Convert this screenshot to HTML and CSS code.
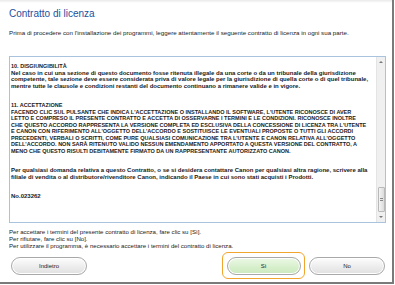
FILE: index.html
```html
<!DOCTYPE html>
<html lang="it">
<head>
<meta charset="utf-8">
<link rel="stylesheet" href="styles.css">
</head>
<body>
<div class="window">
  <h1 class="title">Contratto di licenza</h1>
  <p class="intro">Prima di procedere con l'installazione dei programmi, leggere attentamente il seguente contratto di licenza in ogni sua parte.</p>
  <div class="box">
    <div class="content">
      <p class="para lower"><span class="caps">10. DISGIUNGIBILITÀ</span><br>Nel caso in cui una sezione di questo documento fosse ritenuta illegale da una corte o da un tribunale della giurisdizione<br>competente, tale sezione deve essere considerata priva di valore legale per la giurisdizione di quella corte o di quel tribunale,<br>mentre tutte le clausole e condizioni restanti del documento continuano a rimanere valide e in vigore.</p>
      <p class="para">11. ACCETTAZIONE<br>FACENDO CLIC SUL PULSANTE CHE INDICA L'ACCETTAZIONE O INSTALLANDO IL SOFTWARE, L'UTENTE RICONOSCE DI AVER<br>LETTO E COMPRESO IL PRESENTE CONTRATTO E ACCETTA DI OSSERVARNE I TERMINI E LE CONDIZIONI. RICONOSCE INOLTRE<br>CHE QUESTO ACCORDO RAPPRESENTA LA VERSIONE COMPLETA ED ESCLUSIVA DELLA CONCESSIONE DI LICENZA TRA L'UTENTE<br>E CANON CON RIFERIMENTO ALL'OGGETTO DELL'ACCORDO E SOSTITUISCE LE EVENTUALI PROPOSTE O TUTTI GLI ACCORDI<br>PRECEDENTI, VERBALI O SCRITTI, COME PURE QUALSIASI COMUNICAZIONE TRA L'UTENTE E CANON RELATIVA ALL'OGGETTO<br>DELL'ACCORDO. NON SARÀ RITENUTO VALIDO NESSUN EMENDAMENTO APPORTATO A QUESTA VERSIONE DEL CONTRATTO, A<br>MENO CHE QUESTO RISULTI DEBITAMENTE FIRMATO DA UN RAPPRESENTANTE AUTORIZZATO CANON.</p>
      <p class="para lower">Per qualsiasi domanda relativa a questo Contratto, o se si desidera contattare Canon per qualsiasi altra ragione, scrivere alla<br>filiale di vendita o al distributore/rivenditore Canon, indicando il Paese in cui sono stati acquisti i Prodotti.</p>
      <p class="para lower">No.023262</p>
    </div>
    <div class="scrollbar">
      <span class="arrow up"></span>
      <span class="track"></span>
      <span class="thumb"><span class="grip"></span></span>
      <span class="arrow down"></span>
    </div>
  </div>
  <p class="notes">Per accettare i termini del presente contratto di licenza, fare clic su [Sì].<br>Per rifiutare, fare clic su [No].<br>Per utilizzare il programma, è necessario accettare i termini del contratto di licenza.</p>
  <div class="buttons">
    <button class="btn">Indietro</button>
    <span class="spacer"></span>
    <span class="focus"><button class="btn yes">Sì</button></span>
    <button class="btn">No</button>
  </div>
</div>
</body>
</html>
```

FILE: styles.css
```css
html, body {
  margin: 0;
  padding: 0;
  background: #ffffff;
}
body {
  width: 395px;
  height: 285px;
  overflow: hidden;
  font-family: "Liberation Sans", Arial, sans-serif;
}
.window {
  box-sizing: border-box;
  width: 394px;
  height: 284px;
  border-right: 2px solid #7a7a7a;
  border-bottom: 2px solid #7a7a7a;
  background: linear-gradient(#e9e9e9, #ffffff 3px);
  padding: 8px 7px 0 9px;
  display: flex;
  flex-direction: column;
}
.title {
  margin: 0;
  font-size: 10px;
  line-height: 12px;
  font-weight: normal;
  color: #2250a0;
}
.intro {
  margin: 9px 0 0 0;
  font-size: 6.2px;
  line-height: 7px;
  color: #222;
}
.box {
  box-sizing: border-box;
  margin-top: 20px;
  width: 377px;
  height: 167px;
  border: 1px solid #a9c3df;
  display: flex;
}
.content {
  flex: 1;
  padding: 6px 0 0 1px;
  font-size: 5.5px;
  line-height: 6.5px;
  font-weight: bold;
  color: #1a1a1a;
  overflow: hidden;
  white-space: nowrap;
}
.para {
  margin: 0 0 13px 0;
}
.para.lower {
  font-size: 6px;
}
.caps {
  font-size: 5.5px;
}
.scrollbar {
  width: 8px;
  background: #f0f0f0;
  border-left: 1px solid #e4e4e4;
  display: flex;
  flex-direction: column;
  align-items: center;
}
.arrow {
  width: 0;
  height: 0;
  border-left: 2px solid transparent;
  border-right: 2px solid transparent;
  margin: 4px 0;
}
.arrow.up {
  border-bottom: 2px solid #777;
}
.arrow.down {
  border-top: 2px solid #777;
}
.track {
  flex: 1;
}
.thumb {
  box-sizing: border-box;
  width: 7px;
  height: 25px;
  border: 1px solid #b9b9b9;
  border-radius: 1px;
  background: linear-gradient(90deg, #f4f4f4, #dcdcdc);
  display: flex;
  align-items: center;
  justify-content: center;
}
.grip {
  width: 3px;
  height: 3px;
  background: repeating-linear-gradient(#888 0 1px, transparent 1px 2px);
}
.notes {
  margin: 5px 0 0 0;
  font-size: 6.1px;
  line-height: 7px;
  color: #222;
}
.buttons {
  margin-top: 3px;
  display: flex;
  align-items: center;
  padding-left: 2px;
}
.spacer {
  flex: 1;
}
.btn {
  box-sizing: border-box;
  width: 76px;
  height: 18px;
  border: 1px solid #a8a8a8;
  border-radius: 9px;
  background: linear-gradient(#fdfdfd, #ebebeb 60%, #e0e0e0);
  box-shadow: inset 0 0 0 1px #ffffff;
  font-family: "Liberation Sans", Arial, sans-serif;
  font-size: 6px;
  color: #222;
  padding: 0;
}
.btn.yes {
  width: 74px;
  background: linear-gradient(#ecf9e6, #d6efcb 60%, #cbe8bf);
}
.focus {
  box-sizing: border-box;
  border: 1.5px solid #f2a52c;
  border-radius: 6px;
  padding: 3.5px;
  display: flex;
  margin-right: 4px;
}
```
